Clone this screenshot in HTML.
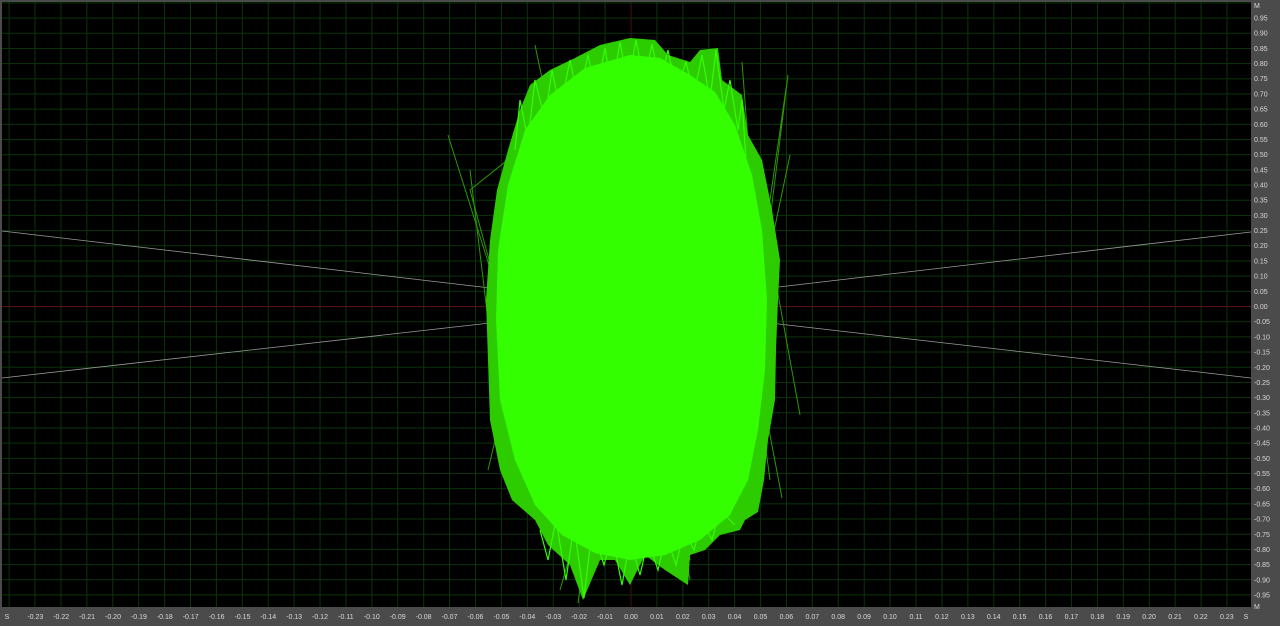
<!DOCTYPE html>
<html><head><meta charset="utf-8"><style>
html,body{margin:0;padding:0;background:#4b4b4b;width:1280px;height:626px;overflow:hidden}
svg{display:block}
text{font-family:"Liberation Sans",sans-serif;font-size:7px;fill:#d8d8d8}
</style></head><body>
<svg width="1280" height="626" viewBox="0 0 1280 626" xmlns="http://www.w3.org/2000/svg">
<defs>
<pattern id="gv" patternUnits="userSpaceOnUse" x="630.5" y="0" width="25.913" height="626"><rect x="0" y="0" width="1" height="626" fill="#0b330b"/></pattern>
<pattern id="gh" patternUnits="userSpaceOnUse" x="0" y="306" width="1280" height="15.18"><rect x="0" y="0" width="1280" height="1" fill="#0b330b"/></pattern>
</defs>
<rect x="0" y="0" width="1280" height="626" fill="#4b4b4b"/>
<rect x="2" y="2" width="1249" height="605" fill="#000"/>
<rect x="2" y="2" width="1249" height="605" fill="url(#gv)"/>
<rect x="2" y="2" width="1249" height="605" fill="url(#gh)"/>
<line x1="2" y1="306.5" x2="1251" y2="306.5" stroke="#5a1010" stroke-width="1"/>
<line x1="631" y1="2" x2="631" y2="607" stroke="#4a0e0e" stroke-width="1"/>
<g stroke="#9a9a9a" stroke-width="0.8" fill="none">
<line x1="2" y1="231" x2="490" y2="288"/><line x1="2" y1="378" x2="490" y2="323"/>
<line x1="770" y1="288" x2="1251" y2="232"/><line x1="770" y1="323" x2="1251" y2="378"/>
</g>
<g stroke="#2a9a00" stroke-width="1" fill="none">
<polyline points="448,135 500,300 470,190 520,150"/>
<polyline points="535,45 580,260 560,80"/>
<polyline points="742,62 760,300 788,75 770,200"/>
<polyline points="800,415 770,250 790,155"/>
<polyline points="782,498 750,330 770,480"/>
<polyline points="578,603 600,450 560,590"/>
<polyline points="690,580 660,420 690,560"/>
<polyline points="470,170 500,420 488,470"/>
</g>
<polygon fill="#2dcc00" points="630,38 655,40 668,55 690,62 700,50 718,48 722,80 742,95 748,135 762,160 772,210 780,260 778,300 776,350 775,400 768,440 764,480 758,512 745,520 740,530 720,535 705,550 690,555 688,585 665,570 645,555 630,585 615,560 600,560 583,600 570,565 548,545 535,520 512,500 500,470 490,420 488,360 486,300 490,240 497,190 508,150 520,110 530,85 550,70 575,58 600,45"/>
<polyline fill="none" stroke="#33ff00" stroke-width="1.2" points="515,150 520,100 528,140 535,80 545,120 552,70 560,110 570,60 578,100 588,55 596,95 605,48 612,90 620,42 628,85 636,40 644,82 652,44 660,85 668,50 676,90 686,62 694,95 702,55 710,100 716,50 724,110 730,80 738,130 742,100 746,160"/>
<polyline fill="none" stroke="#33ff00" stroke-width="1.2" points="540,530 548,560 556,520 566,580 574,525 584,598 592,530 604,565 612,535 622,585 630,540 640,575 648,540 658,570 666,535 676,565 684,530 694,550 702,520 712,540 720,510 735,525"/>
<polygon fill="#33ff00" points="630,55 660,58 690,75 715,92 735,125 752,175 762,230 767,300 765,370 758,430 748,480 730,515 700,540 665,555 630,560 595,553 562,535 535,505 515,460 500,400 496,320 498,250 508,185 525,130 550,95 585,68"/>
<g>
<text x="1254" y="8" >M</text>
<text x="1254" y="20.5">0.95</text><text x="1254" y="35.7">0.90</text><text x="1254" y="50.9">0.85</text><text x="1254" y="66.1">0.80</text><text x="1254" y="81.2">0.75</text><text x="1254" y="96.4">0.70</text><text x="1254" y="111.6">0.65</text><text x="1254" y="126.8">0.60</text><text x="1254" y="142">0.55</text><text x="1254" y="157.1">0.50</text><text x="1254" y="172.3">0.45</text><text x="1254" y="187.5">0.40</text><text x="1254" y="202.7">0.35</text><text x="1254" y="217.9">0.30</text><text x="1254" y="233">0.25</text><text x="1254" y="248.2">0.20</text><text x="1254" y="263.4">0.15</text><text x="1254" y="278.6">0.10</text><text x="1254" y="293.8">0.05</text><text x="1254" y="309">0.00</text><text x="1254" y="324.2">-0.05</text><text x="1254" y="339.4">-0.10</text><text x="1254" y="354.6">-0.15</text><text x="1254" y="369.8">-0.20</text><text x="1254" y="385">-0.25</text><text x="1254" y="400.1">-0.30</text><text x="1254" y="415.3">-0.35</text><text x="1254" y="430.5">-0.40</text><text x="1254" y="445.7">-0.45</text><text x="1254" y="460.9">-0.50</text><text x="1254" y="476">-0.55</text><text x="1254" y="491.2">-0.60</text><text x="1254" y="506.4">-0.65</text><text x="1254" y="521.6">-0.70</text><text x="1254" y="536.8">-0.75</text><text x="1254" y="551.9">-0.80</text><text x="1254" y="567.1">-0.85</text><text x="1254" y="582.3">-0.90</text><text x="1254" y="597.5">-0.95</text>
<text x="1254" y="609">M</text>
</g>
<g text-anchor="middle">
<text x="7" y="619">S</text>
<text x="35.3" y="619">-0.23</text><text x="61.2" y="619">-0.22</text><text x="87.1" y="619">-0.21</text><text x="113" y="619">-0.20</text><text x="138.9" y="619">-0.19</text><text x="164.8" y="619">-0.18</text><text x="190.7" y="619">-0.17</text><text x="216.6" y="619">-0.16</text><text x="242.5" y="619">-0.15</text><text x="268.2" y="619">-0.14</text><text x="294.1" y="619">-0.13</text><text x="320" y="619">-0.12</text><text x="345.9" y="619">-0.11</text><text x="371.8" y="619">-0.10</text><text x="397.7" y="619">-0.09</text><text x="423.6" y="619">-0.08</text><text x="449.5" y="619">-0.07</text><text x="475.4" y="619">-0.06</text><text x="501.4" y="619">-0.05</text><text x="527.3" y="619">-0.04</text><text x="553.2" y="619">-0.03</text><text x="579.1" y="619">-0.02</text><text x="605" y="619">-0.01</text><text x="631" y="619">0.00</text><text x="656.9" y="619">0.01</text><text x="682.8" y="619">0.02</text><text x="708.7" y="619">0.03</text><text x="734.6" y="619">0.04</text><text x="760.5" y="619">0.05</text><text x="786.4" y="619">0.06</text><text x="812.3" y="619">0.07</text><text x="838.2" y="619">0.08</text><text x="864.1" y="619">0.09</text><text x="890" y="619">0.10</text><text x="916" y="619">0.11</text><text x="941.9" y="619">0.12</text><text x="967.8" y="619">0.13</text><text x="993.7" y="619">0.14</text><text x="1019.6" y="619">0.15</text><text x="1045.5" y="619">0.16</text><text x="1071.4" y="619">0.17</text><text x="1097.3" y="619">0.18</text><text x="1123.2" y="619">0.19</text><text x="1149.1" y="619">0.20</text><text x="1175" y="619">0.21</text><text x="1200.9" y="619">0.22</text><text x="1226.8" y="619">0.23</text>
<text x="1246" y="619">S</text>
</g>
</svg>
</body></html>
